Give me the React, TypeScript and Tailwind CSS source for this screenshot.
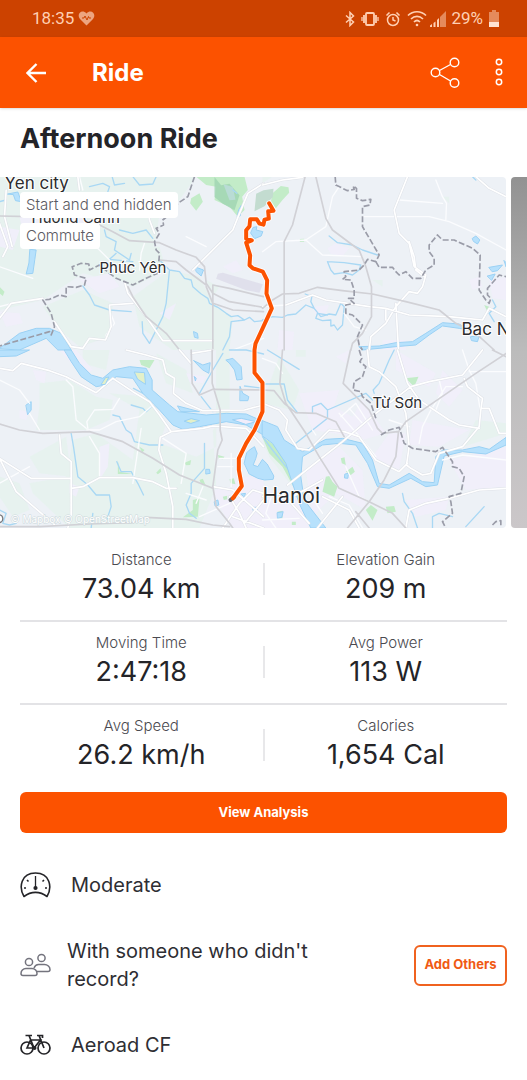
import type { ReactNode } from 'react'

type Stat = {
  label: string
  value: string
}

const STATS: [Stat, Stat][] = [
  [
    { label: 'Distance', value: '73.04 km' },
    { label: 'Elevation Gain', value: '209 m' },
  ],
  [
    { label: 'Moving Time', value: '2:47:18' },
    { label: 'Avg Power', value: '113 W' },
  ],
  [
    { label: 'Avg Speed', value: '26.2 km/h' },
    { label: 'Calories', value: '1,654 Cal' },
  ],
]

const TAGS = ['Start and end hidden', 'Commute']

type MapTile = {
  id: string
  transform: string
  fields: string
  woods?: string
  urban: string
  lakes: string
  streams: string
  minor: string
  roads: string
  highways: string
  borders: string
}

// Map geometry is kept in tiles, three units to a pixel
const TILES: MapTile[] = [
  {
    id: 'nw',
    transform: 'translate(0 -21)',
    fields:
      'M0 20H590L540 90L480 130L470 200L440 300L330 330L250 310L130 390L0 420ZM250 230H480L500 300L400 350L300 300ZM130 410L250 360L340 400L330 500L240 530L180 480ZM510 300L600 320L640 400L700 440L690 540H520L420 470L400 380ZM620 330L660 350L640 380Z',
    woods:
      'M590 20L620 45L650 50L645 90L690 110L715 140L735 120L728 80L745 60L735 20ZM575 85L600 70L610 95L590 122L572 100ZM0 350L15 365L10 378L0 370Z',
    urban:
      'M60 140H150L200 180L160 210L70 190ZM200 120H260V160H210ZM0 170L60 180L40 240L0 230ZM0 425L60 430L70 460L20 470ZM240 330L330 310L360 350L300 370ZM670 290L710 270L730 300L700 310ZM480 430L530 400L510 450Z',
    lakes:
      'M92 238L110 240L106 268L100 310L80 312L88 280ZM25 72L55 66L66 95L48 92L42 75ZM583 485L594 490L596 505L586 502ZM762 172L772 170L770 180L790 185L785 198L765 206L754 190ZM718 118L726 105L722 138L714 140ZM590 292L612 300L605 318L590 305ZM0 535L60 490L110 475H150L185 490L215 540H175L140 505L60 540Z',
    streams:
      'M338 20L345 45L375 40M400 20L420 45L460 42L470 20M270 50L310 40L330 50L325 65M700 60L712 70M0 95L20 90M315 180L320 200L350 215L345 240L390 270L395 250M350 250L330 268L400 275M360 180L400 190L440 180L460 205M250 348L270 375L285 405L330 420L395 425M510 300L500 400L490 440L450 520L430 490L428 455M510 300L540 305L555 325L575 330L580 350L605 372L625 385L630 400L655 412L680 430L695 440L715 437L735 450L750 442L765 455L792 452M735 450L695 455L690 500L670 540M480 270L510 300',
    minor:
      'M0 290L100 325M240 20L250 60M290 230L330 270L350 310M420 300L425 250L435 220M0 410L60 395L130 388M560 200L620 230M700 540L792 505M330 420L345 460L320 495L318 510',
    roads:
      'M0 445L35 400L130 385M165 455L215 530L250 535L270 505L318 510L335 470L330 405L400 400M235 20L240 60M375 335L385 370L440 440L490 512L640 512M20 60L15 140L38 230M0 160L25 230L10 260M580 300L640 240L700 180L720 130L745 70L792 40M440 70L450 150L465 190',
    highways:
      'M0 138L90 140M290 160L340 185L390 212L480 218L530 240L590 262L615 290L620 340L640 370L690 395L792 412M480 270L530 275L560 300L620 345M792 380L690 355L640 345V540M385 350L400 380L440 440L500 490L540 540M620 350L640 400L700 420L792 425',
    borders:
      'M585 20L565 80L535 100L520 125L490 150L492 165L470 175L480 190L465 215L470 240L480 250L475 310L455 318L440 325L400 345L350 325L330 310L300 285L270 300L268 282L245 280L218 290L225 315L260 325L255 345L230 352L200 350V380L180 375L150 388L130 390L155 430L165 470L155 495L150 485L0 528',
  },
  {
    id: 'ne',
    transform: 'translate(789 -21)',
    fields: 'M0 20H30L0 40ZM330 330H360V350ZM540 80H560V100Z',
    woods: 'M30 70L55 48L78 52L80 68L60 90L40 115L25 95ZM112 207L125 206V215H112ZM665 405L680 410L675 425Z',
    urban:
      'M195 235L220 220L260 235L240 258L205 252ZM50 480L95 485L90 540H45ZM620 330L650 320L660 350L630 360ZM680 330L730 320V390L690 385ZM150 410L200 405L190 430L160 435ZM360 510H430V540H360Z',
    lakes:
      'M630 205L640 198L652 210L645 222L634 215ZM680 292L720 285L705 302L690 305ZM675 318L698 312L688 330ZM725 272L731 278V290ZM625 500L650 498L645 515L628 512ZM290 530L350 528L400 518L450 515L490 490L540 458L590 462L620 480L590 475L540 468L500 495L460 525L400 530L300 540Z',
    streams:
      'M200 198L225 218L270 225L300 240L345 255M195 275L245 278L295 285L290 300L270 315L245 308L215 312L205 300L195 275M0 450L30 440L60 442L75 435L100 432L130 405L155 415L145 395L148 380L128 372M155 415L175 440L200 432L220 435L235 400L245 410L240 465L225 480L215 465L205 468V450L180 452L160 445L165 430L195 435M630 20L640 30M690 390L700 410L680 430L695 455',
    minor:
      'M0 245L40 215L130 210L190 170L210 80L230 50M130 210L180 255L300 260M300 140L500 140L560 155L640 190L731 240M410 90L540 100M520 30L540 80L552 100L550 150M0 410L70 405M245 430L275 470L310 480',
    roads:
      'M435 20L395 120L410 190L440 220L455 290L490 315L480 350L465 370L440 365L400 410L370 460L325 500L320 540M70 405L150 375L190 390L320 410L370 415L440 435L560 440L660 450L680 415L731 440M370 420V450M400 400L408 540M440 215L455 260L460 300L485 320M640 20L680 55L731 80M0 45L60 30L120 22',
    highways:
      'M128 20L90 165L65 215L65 540M160 20L190 145L210 180L290 240L310 290L327 350V440L300 490L270 520L265 540M0 415L30 390L60 372L110 370L165 352L240 362L330 372L430 395L530 420L580 460L640 490L695 540',
    borders:
      'M218 20L220 45L255 62L275 58L272 48L282 55V85L300 92L325 88L322 105L300 110V170L350 255L340 275L315 268L305 285L290 300L245 305L250 320L240 328L265 330L275 360V385L258 385L275 400L250 405V430L270 435L300 465L285 500L290 525L300 540M340 275L350 292L390 292L400 305L410 315L430 305L450 325H475L490 300L515 285V265L500 245V225L525 195L540 210H575L630 235L653 255L650 360L670 390L680 400L685 385L675 375V355L710 315L731 320',
  },
  {
    id: 'sw',
    transform: 'translate(0 519)',
    fields:
      'M120 100L210 90L290 140L340 150L330 210L260 240L110 240L120 170ZM250 0H330L320 60L250 40ZM330 130L440 140L500 220L480 280L590 320L650 290V0H690V200L640 240L650 410L600 534H210L100 430L90 400L200 380L220 270L290 250L400 330L420 180ZM0 380L60 400L90 480L40 500L0 440ZM90 320L200 260L215 380L120 370ZM470 10L560 60L580 130L500 100Z',
    woods:
      'M420 30H465L450 55L425 45ZM600 390L610 386L618 405L605 402ZM555 338L575 330L572 345L560 346ZM470 368L483 355L485 365L475 373ZM420 290L435 300L428 308ZM355 330L360 365L400 372H355ZM580 450L600 445L595 500L550 502L580 480ZM655 315L675 320L670 328L658 326ZM690 388L703 385L708 403L693 400ZM670 440L683 437V448L673 450Z',
    urban:
      'M100 60L140 65L135 100L110 90ZM300 290L330 280L325 350L300 390ZM180 0L230 0L280 60L250 80ZM60 180L90 185L80 210L60 205ZM700 390L792 370V534H700L660 470L640 420L700 410ZM210 400L240 410L230 440L210 430ZM560 70L620 80L610 100L570 95ZM700 205L760 210L740 222L700 218Z',
    lakes:
      'M0 0H90L50 18L0 20ZM195 0H215L240 40L275 75L310 85L340 60L390 50L440 55L458 90V120L510 165L535 185L620 195L680 190L740 192L792 215V255L740 225L680 215L600 230L550 238L520 225L480 180L430 130L400 85L350 80L320 105L290 110L245 80L215 35ZM535 168L600 185H545ZM80 165L95 155V180L85 193ZM583 32L610 45L632 38L628 70L610 60ZM585 80L590 85L588 92ZM680 30L700 25L725 50L728 88L712 90L705 60L690 40ZM722 110L730 130L748 140L745 152H722ZM645 455L655 450L658 465L648 468ZM620 358L630 358L632 370L620 372ZM725 432L738 430L735 440ZM760 472H775L772 482H762Z',
    streams:
      'M215 250L222 290L235 380L265 405L290 435L330 435L335 470L325 500L320 515M340 195L360 200L380 240L395 250L405 275L450 285L490 285M395 165L430 175L440 185L455 170M352 335L365 365L395 365L415 400L432 435M615 280V355L575 400V430L560 465L570 490L590 505M600 130L640 60L670 10M605 140L640 185M735 108L792 115M0 480L20 490L10 520L30 525L50 520M402 115L440 135M280 490L275 534M690 0L740 0L792 12',
    minor:
      'M0 90L60 120L90 160M90 190L120 240M265 235L262 215L285 180L340 178L360 145M262 240L300 240L350 215L420 200L460 165M425 235L412 320L400 400M490 265L560 310L545 400M0 400L90 350M270 260L300 310V380M695 310V410M660 325H730M200 90L220 110L230 210L260 235M610 410L590 460M655 350H700M560 430L620 450M600 500L690 460',
    roads:
      'M0 55L40 62L65 40L150 62L200 80L290 128L340 85L400 125L450 155L480 195L515 245L482 262L478 300L500 370L520 470V534M515 245L610 235L640 228L740 235L792 290M380 0L440 15L490 30L500 70L525 85L522 130L560 160L610 182L735 180L792 165M180 255L185 310L215 335V495L205 534M0 325L95 385H215M215 415L250 410L300 383H400L460 395L500 415H530M0 325L50 425L165 524M640 410L700 420L792 500M690 440L720 490L740 534M670 534L720 460L760 420L792 430M700 500L792 534M735 520L792 450M540 0L575 40M575 10L640 0',
    highways:
      'M0 222L60 240L130 250L270 245L370 275L460 325L540 375L640 415M575 0L578 100L600 135L640 118L792 120M638 0V100L662 180V240L668 270L655 300L640 410L650 470L690 520L700 534M0 530H120L270 522L400 518L440 502L560 508L640 525L690 530',
    borders: '',
  },
  {
    id: 'se',
    transform: 'translate(789 519)',
    fields: 'M0 270L30 280L100 370L90 410L20 320ZM100 0H130V20H100ZM50 20L110 120L90 180L0 160ZM640 210L731 220V250L600 290Z',
    woods:
      'M430 85L468 80L455 110ZM0 262L45 290L85 350L100 375L90 405L60 350L20 310ZM235 325L246 322L250 345L238 340ZM250 365L270 350L277 365L265 375ZM190 380L200 378L210 395L225 410L215 440L180 425ZM310 480L325 465L345 480L330 512ZM45 485L60 482V505H47ZM370 470L395 468L400 485L375 490ZM88 515H100V525H88Z',
    urban:
      'M110 130L230 120L215 170L270 200L300 150L370 250L300 270L250 255L150 240ZM20 420L110 430L140 534H0V400ZM130 360L230 290L300 360L310 480L220 430L150 500ZM380 250H430L410 360L330 320ZM400 0L520 70L500 110L400 60ZM540 60L600 120L560 170L520 130ZM560 330L731 290V410L610 420ZM430 450L560 440L550 480L460 500ZM220 20L260 0L250 40ZM450 210L620 240L530 290L440 285Z',
    lakes:
      'M-39 300L-24 290L-16 310L-20 325L-28 345L-14 350L0 328L14 342L34 378L32 388L6 390L-14 385L-40 372L-55 340L-48 310ZM0 212L45 230L65 270L120 305L190 268L240 265L300 280L330 330L350 400L380 405L440 370L480 395L515 398L520 320L540 300L600 300L650 290L680 298L731 262V285L670 312L600 305L545 318L525 405L490 410L445 385L380 415L345 410L315 340L280 285L230 280L180 285L120 320L115 380L125 450L190 534H145L110 460L90 400L70 340L30 280L0 258ZM248 372L258 370L256 385L247 384ZM45 488L62 485L58 502L46 505Z',
    streams:
      'M395 0L380 30L365 65L350 100L332 120L335 130M15 0L110 58M0 102H65L75 150L105 188M150 188V170L175 160L195 180L310 130L330 150M195 180V205L100 280M610 530L665 470M420 430L425 455L450 490L465 534M510 534V500L530 490L570 500M0 260L30 300L95 380L92 405',
    minor:
      'M230 190L300 270L340 320M235 200L280 160L330 240M260 175L300 220M470 280L480 230L505 180L550 110L600 110M530 90L540 130L520 180M600 0L620 60L640 100L655 190M250 350L290 440L320 455M620 65H731M150 240L160 255M0 25L40 40L60 70M200 440L260 465L300 534M540 330L600 315L731 330M380 210L440 230M140 430L180 490M30 430L10 490L40 534M0 510L110 505',
    roads:
      'M315 0L320 50L350 65L400 110L430 190L440 290L432 345L445 355L480 375L505 370L530 310L600 290L650 230L655 180L660 145L615 110L605 85M0 160L50 180L75 210L70 240L105 295L140 300L200 240L245 245L290 260L340 330L410 365L435 340M75 405L240 275L340 190L445 110L500 95L600 75L660 0M165 534L240 440M90 440L180 390M405 0L435 100L470 150L560 210L590 225L650 235M660 175H680L710 250H731M430 534L440 480L490 460L560 445L650 420L731 415M180 440L260 480L290 534M0 440L60 430L140 520',
    highways:
      'M60 0L52 100L70 160L130 250L170 320L230 415L320 455L390 490L430 534M264 0L242 100L320 180L345 235L360 250L405 245M731 10L640 70L430 215L408 245L400 320L365 390L320 455L255 534M0 120L35 122L65 160L100 188L160 190L220 215L245 260M690 0L731 20M280 485L320 534',
    borders:
      'M290 0L298 25L292 35L310 50L300 80L275 95L272 120L295 125L300 140L325 160L340 205M355 255L380 240L410 232L425 280L450 295L520 305L540 292L570 335V350L590 355L605 380L595 430L560 440L565 455L570 490L540 515L550 534M690 525L700 515L715 512V528',
  },
]

const ROUTE =
  'M809 79L822 101L806 103L808 125L795 128L792 143L780 140L772 127H752L750 148L740 160V185L757 190L740 197L752 235L750 265L760 274L790 284L803 310L801 350L817 394L789 455L768 500L765 519V587L789 617V704L765 759L740 799L718 844V879L727 927L700 964'

const PLACES = [
  { name: 'Yen city', x: 5, y: 12, size: 17 },
  { name: 'Hương Canh', x: 32, y: 46, size: 15 },
  { name: 'Phúc Yên', x: 100, y: 96, size: 15 },
  { name: 'Bac Ninh', x: 462, y: 158, size: 17 },
  { name: 'Từ Sơn', x: 373, y: 231, size: 15 },
  { name: 'Hanoi', x: 263, y: 326, size: 21 },
]

function RouteMap() {
  return (
    <svg
      viewBox="0 0 507 351"
      preserveAspectRatio="xMidYMid slice"
      className="block h-full w-full"
      role="img"
      aria-label="Route map around Hanoi"
    >
      <rect width="507" height="351" fill="#edf1f6" />
      <g transform="scale(0.33333)" strokeLinejoin="round" strokeLinecap="round" fill="none">
        {TILES.map((tile) => (
          <g key={tile.id} transform={tile.transform}>
            <path d={tile.fields} fill="#e5f2ed" fillOpacity="0.8" />
            <path d={tile.urban} fill="#f1eefb" fillOpacity="0.9" />
            <path d={tile.woods} fill="#c3ecc8" />
          </g>
        ))}
        <path d="M655 290L670 287L790 322L780 347L740 340L650 305Z" fill="#e0e0ec" />
        <path d="M645 0L665 25L690 20L720 55L705 100L670 80L645 60Z" fill="#9fd4b2" fillOpacity="0.8" />
        <path d="M672 22L690 70L708 68L700 30Z" fill="#b9dcd5" />
        <path d="M770 50L792 40L822 35L820 60L795 88L765 103Z" fill="#c3dcd0" />
        {TILES.map((tile) => (
          <g key={tile.id} transform={tile.transform}>
            <path d={tile.streams} stroke="#a9d8f4" strokeWidth="4" />
            <path d={tile.lakes} fill="#b7e1fc" stroke="#9bd1f4" strokeWidth="3" />
            <path d={tile.minor} stroke="#fbfcfe" strokeWidth="4" />
            <path d={tile.roads} stroke="#dfe2e8" strokeWidth="8" />
            <path d={tile.roads} stroke="#ffffff" strokeWidth="5" />
            <path d={tile.highways} stroke="#d1d1d6" strokeWidth="5" />
            <path
              d={tile.borders}
              stroke="#9a9ca8"
              strokeWidth="5"
              strokeDasharray="18 7"
              strokeLinecap="butt"
            />
          </g>
        ))}
        {/* River islands */}
        <g fill="#e3f0c9" stroke="#9bd1f4" strokeWidth="3">
          <path d="M305 622L318 602L328 600L318 621Z" />
          <path d="M405 585L435 587L438 622L415 607Z" />
          <path d="M555 732L575 725L600 731L575 739Z" />
          <path d="M700 728L725 724L770 734L740 742Z" fill="#f1edfb" />
        </g>
        <circle cx="-2" cy="1025" r="12" fill="#ffffff" stroke="#77797f" strokeWidth="4" />
        <path d={ROUTE} stroke="#ffffff" strokeWidth="18" strokeOpacity="0.8" />
        <path d="M704 960L693 969" stroke="#62656b" strokeWidth="12" />
        <path d={ROUTE} stroke="#fc5200" strokeWidth="12" />
      </g>
      <g fontFamily="Inter, sans-serif">
        <text x="11" y="346" fontSize="10" fill="#ffffff" stroke="#ccd8db" strokeWidth="1" paintOrder="stroke">
          © Mapbox © OpenStreetMap
        </text>
        {PLACES.map((place) => (
          <text
            key={place.name}
            x={place.x}
            y={place.y}
            fontSize={place.size}
            fill="#2b2b2e"
            stroke="#ffffff"
            strokeWidth="2"
            paintOrder="stroke"
          >
            {place.name}
          </text>
        ))}
      </g>
    </svg>
  )
}

function StatusBar() {
  return (
    <div className="flex h-[37px] items-center justify-between bg-[#cc4200] pr-7 pl-8 font-[Roboto,sans-serif] text-[17px] text-[#ffd0b3]">
      <div className="flex items-center gap-1">
        <span>18:35</span>
        <svg width="17" height="15" viewBox="0 0 17 15" fill="none">
          <path d="M8.500 14.500L2 8C-2 3 4-2.500 8.500 2.500C13-2.500 19 3 15 8Z" fill="#eda47f" />
          <path d="M4 7H6L7 5L9 9L10.500 5.500L11 7H13" stroke="#cc4200" />
        </svg>
      </div>
      <div className="flex items-center gap-1.5">
        <svg width="10" height="16" viewBox="0 0 10 16" fill="none" stroke="currentColor" strokeWidth="1.500">
          <path d="M1 4.500L8.500 11L5 14.500V1.500L8.500 5L1 11.500" />
        </svg>
        <svg width="18" height="16" viewBox="0 0 18 16" fill="none" stroke="currentColor">
          <rect x="5" y="2" width="8" height="12" rx="1" strokeWidth="1.800" />
          <path d="M3 4V12M15 4V12" strokeWidth="1.800" />
          <path d="M1 6V10M17 6V10" strokeWidth="1.300" />
        </svg>
        <svg width="16" height="16" viewBox="0 0 16 16" fill="none" stroke="currentColor" strokeWidth="1.500">
          <circle cx="8" cy="9" r="5.500" />
          <path d="M8 6V9L10.500 10M1.500 4.500L4.500 1.500M14.500 4.500L11.500 1.500" />
        </svg>
        <div className="flex items-center gap-[3px]">
          <svg width="20" height="17" viewBox="0 0 20 17" fill="none" stroke="currentColor" strokeWidth="1.700">
            <path d="M1 5.500C6 0.500 14 0.500 19 5.500M4 9C7.500 5.500 12.500 5.500 16 9M7 12C9 10 11 10 13 12" />
            <circle cx="10" cy="15" r="1.300" fill="currentColor" stroke="none" />
          </svg>
          <svg width="16" height="16" viewBox="0 0 16 16">
            <path d="M10 6L16 0V16H10Z" fill="#e58a5c" />
            <path d="M0 16V14.500L2 13V16ZM3.500 16V12L5.500 10.500V16ZM7 16V9L9 7V16Z" fill="currentColor" />
          </svg>
          <span className="ml-0.5">29%</span>
        </div>
        <svg width="10" height="17" viewBox="0 0 10 17">
          <path d="M3 0H7V2H10V12H0V2H3Z" fill="#e58a5c" />
          <path d="M0 12H10V17H0Z" fill="#ffe3d3" />
        </svg>
      </div>
    </div>
  )
}

function AppHeader() {
  return (
    <header className="flex h-[71px] items-center bg-[#fc5200] pr-[23px] pl-6 text-white shadow-sm">
      <button type="button" aria-label="Back" className="p-0.5">
        <svg width="20" height="20" viewBox="0 0 20 20" fill="none" stroke="currentColor" strokeWidth="2.400">
          <path d="M20 10H2M10.500 1L1.500 10L10.500 19" />
        </svg>
      </button>
      <h1 className="ml-11 flex-1 text-2xl font-bold">Ride</h1>
      <button type="button" aria-label="Share">
        <svg width="30" height="32" viewBox="0 0 30 32" fill="none" stroke="currentColor" strokeWidth="1.400">
          <circle cx="5.500" cy="15.500" r="4.300" />
          <circle cx="24.500" cy="5.500" r="4.300" />
          <circle cx="24.500" cy="26" r="4.300" />
          <path d="M9.500 13.500L20.500 7.500M9.500 17.500L20.500 24" />
        </svg>
      </button>
      <button type="button" aria-label="More options" className="ml-[34px]">
        <svg width="10" height="30" viewBox="0 0 10 30" fill="none" stroke="currentColor" strokeWidth="1.500">
          <circle cx="5" cy="4" r="2.700" />
          <circle cx="5" cy="14" r="2.700" />
          <circle cx="5" cy="24" r="2.700" />
        </svg>
      </button>
    </header>
  )
}

function StatCell({ label, value }: Stat) {
  return (
    <div className="flex flex-1 flex-col items-center">
      <dt className="text-[15px] leading-5 font-light text-[#4a4a50]">{label}</dt>
      <dd className="text-[27px] leading-[38px] text-[#242428]">{value}</dd>
    </div>
  )
}

function EffortIcon() {
  return (
    <svg width="31" height="26" viewBox="0 0 31 26" fill="none" stroke="#242428" strokeWidth="1.600">
      <path d="M4 24.500C-1.500 15 1 1 15.500 1C30 1 32.500 15 27 24.500C20 19 11 19 4 24.500Z" strokeLinejoin="round" />
      <path d="M15.500 4V15" strokeWidth="1.300" />
      <path d="M4 16H6M25 16H27M7 8L8.500 9.500M24 8L22.500 9.500" />
      <circle cx="15.500" cy="16" r="1.300" fill="#242428" />
    </svg>
  )
}

function PeopleIcon() {
  return (
    <svg width="31" height="24" viewBox="0 0 31 24" fill="none" stroke="#74747e" strokeWidth="1.500">
      <circle cx="9" cy="9" r="3.600" />
      <circle cx="21.500" cy="5" r="3.600" />
      <path d="M6 15.500H12C15 15.500 17 18 17 20.500C17 22 16 22.500 15 22.500H3C2 22.500 1 22 1 20.500C1 18 3 15.500 6 15.500Z" />
      <path d="M14 15C15 12.500 16.500 11.500 18.500 11.500H24.500C27.500 11.500 30 14 30 16.500C30 18 29 18.500 28 18.500H17" />
    </svg>
  )
}

function BikeIcon() {
  return (
    <svg width="31" height="22" viewBox="0 0 31 22" fill="none" stroke="#242428" strokeWidth="1.700">
      <circle cx="7" cy="14" r="6" />
      <circle cx="24" cy="14" r="6" />
      <path d="M7 14L10.500 6H20.500L14 14ZM14 14L9 1.500M24 14L19 1.500M5.500 1.500H12M17 1.500H22.500V4" />
      <circle cx="14.500" cy="14" r="2" fill="#242428" stroke="none" />
    </svg>
  )
}

type DetailRowProps = {
  icon: ReactNode
  action?: ReactNode
  children: ReactNode
}

function DetailRow({ icon, action, children }: DetailRowProps) {
  return (
    <li className="flex items-center">
      <span className="shrink-0">{icon}</span>
      <span className={`min-w-0 flex-1 text-xl leading-7 text-[#2e2e33] ${action ? 'ml-4 pr-16' : 'ml-5'}`}>
        {children}
      </span>
      {action}
    </li>
  )
}

export default function App() {
  return (
    <div className="min-h-screen bg-white font-[Inter,sans-serif] text-[#242428]">
      <StatusBar />
      <AppHeader />

      <main>
        <h2 className="px-5 pt-3 pb-5 text-[27px] leading-[37px] font-bold">Afternoon Ride</h2>

        <div className="flex h-[351px] gap-[5px] overflow-hidden">
          <div className="relative min-w-0 flex-1 overflow-hidden rounded-r">
            <RouteMap />
            <ul className="absolute top-[15px] left-5 flex flex-col items-start gap-[5px]">
              {TAGS.map((tag) => (
                <li
                  key={tag}
                  className="rounded-sm bg-white px-[6px] text-[15px] leading-[26px] font-light text-[#5a5a62]"
                >
                  {tag}
                </li>
              ))}
            </ul>
          </div>
          <div className="w-4 shrink-0 rounded-l bg-linear-to-b from-[#929292] via-[#bcbcbc] to-[#cbc7c9]" />
        </div>

        <div className="px-5 pt-[11px]">
          {STATS.map(([left, right], index) => (
            <dl
              key={left.label}
              className={`flex items-center pt-[11px] pb-3 ${
                index < STATS.length - 1 ? 'border-b-2 border-[#e3e3e6]' : ''
              }`}
            >
              <StatCell {...left} />
              <div className="h-8 w-0.5 bg-[#e8e8ea]" />
              <StatCell {...right} />
            </dl>
          ))}

          <button
            type="button"
            className="mt-1.5 h-[41px] w-full rounded-md bg-[#fc5200] text-[13px] font-bold text-white"
          >
            View Analysis
          </button>

          <ul className="flex flex-col gap-[38px] pt-[38px] pb-5">
            <DetailRow icon={<EffortIcon />}>Moderate</DetailRow>
            <DetailRow
              icon={<PeopleIcon />}
              action={
                <button
                  type="button"
                  className="h-[41px] w-[93px] shrink-0 rounded-md border-2 border-[#f0621f] text-[13px] font-bold whitespace-nowrap text-[#f05a14]"
                >
                  Add Others
                </button>
              }
            >
              With someone who didn't record?
            </DetailRow>
            <DetailRow icon={<BikeIcon />}>Aeroad CF</DetailRow>
          </ul>
        </div>
      </main>
    </div>
  )
}
